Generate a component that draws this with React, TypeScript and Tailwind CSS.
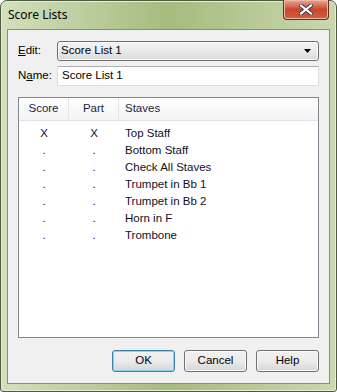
import React from 'react';

const rows = [
  { score: 'X', part: 'X', staff: 'Top Staff' },
  { score: '.', part: '.', staff: 'Bottom Staff' },
  { score: '.', part: '.', staff: 'Check All Staves' },
  { score: '.', part: '.', staff: 'Trumpet in Bb 1' },
  { score: '.', part: '.', staff: 'Trumpet in Bb 2' },
  { score: '.', part: '.', staff: 'Horn in F' },
  { score: '.', part: '.', staff: 'Trombone' },
];

function DialogButton({ label, isDefault }: { label: string; isDefault?: boolean }) {
  return (
    <button
      className={
        'w-[63px] h-[22px] rounded-[3px] border text-[11.5px] text-black bg-gradient-to-b from-[#f2f2f2] via-[#ebebeb] to-[#d6d6d6] ' +
        (isDefault ? 'border-[#3c7fb1] shadow-[inset_0_0_0_1px_#8ed0f0]' : 'border-[#707070] shadow-[inset_0_0_0_1px_#fbfbfb]')
      }
    >
      {label}
    </button>
  );
}

export default function App() {
  return (
    <div className="w-[337px] h-[392px] font-['Liberation_Sans',sans-serif] text-[11.5px] text-black">
      <div className="w-full h-full flex flex-col rounded-t-[7px] rounded-b-[3px] border border-[#4d5a40] bg-gradient-to-r from-[#d3e0bd] via-[#a6bb7e] to-[#c9d8ae] shadow-[inset_0_0_0_1px_#e6eedb]">
        {/* Title bar */}
        <div className="relative h-[28px] flex items-center pl-[7px] shrink-0">
          <span className="font-['Noto_Sans',sans-serif] text-[12px] text-black">Score Lists</span>
          <div className="absolute right-[7px] top-[-1px] w-[46px] h-[20px] rounded-b-[4px] border border-[#6b2a1e] border-t-0 bg-gradient-to-b from-[#e8a696] via-[#c9452c] to-[#d2603f] flex items-center justify-center shadow-[inset_0_0_0_1px_#f0b9a8]">
            <svg width="14" height="11" viewBox="0 0 14 11">
              <path d="M2 1.5 L12 9.5 M12 1.5 L2 9.5" stroke="#3a3a3a" strokeWidth="4" strokeLinecap="square" />
              <path d="M2 1.5 L12 9.5 M12 1.5 L2 9.5" stroke="#ffffff" strokeWidth="2.2" strokeLinecap="square" />
            </svg>
          </div>
        </div>

        {/* Client area */}
        <div className="flex-1 mx-[6px] mb-[7px] border border-[#84936a] bg-[#f0f0f0] flex flex-col px-[10px] pt-[11px] pb-[10px]">
          <div className="flex items-center h-[20px]">
            <label className="w-[39px]">
              <span className="underline">E</span>dit:
            </label>
            <div className="relative flex-1 h-[20px] rounded-[3px] border border-[#707070] bg-gradient-to-b from-[#f2f2f2] via-[#ebebeb] to-[#d9d9d9] flex items-center pl-[3px] shadow-[inset_0_0_0_1px_#fafafa]">
              Score List 1
              <svg className="absolute right-[6px] top-[7px]" width="8" height="4" viewBox="0 0 8 4">
                <path d="M0 0 H7 L3.5 4 Z" fill="#000" />
              </svg>
            </div>
          </div>
          <div className="flex items-center h-[20px] mt-[5px]">
            <label className="w-[39px]">
              N<span className="underline">a</span>me:
            </label>
            <div className="flex-1 h-[20px] border border-[#dbdfe6] border-t-[#abadb3] bg-white flex items-center pl-[4px]">
              Score List 1
            </div>
          </div>

          {/* List */}
          <div className="mt-[11px] h-[241px] border border-[#828790] bg-white flex flex-col">
            <div className="flex h-[23px] bg-gradient-to-b from-white to-[#f2f3f5] border-b border-[#e2e3e5] text-[#1e1e3c]">
              <div className="w-[50px] flex items-center justify-center border-r border-[#e5e5e5]">Score</div>
              <div className="w-[50px] flex items-center justify-center border-r border-[#e5e5e5]">Part</div>
              <div className="flex-1 flex items-center pl-[6px]">Staves</div>
            </div>
            <div className="flex flex-col pt-[4px] text-[#101028]">
              {rows.map((r) => (
                <div key={r.staff} className="flex h-[17px] items-center">
                  <div className="w-[50px] text-center">{r.score}</div>
                  <div className="w-[50px] text-center">{r.part}</div>
                  <div className="pl-[6px]">{r.staff}</div>
                </div>
              ))}
            </div>
          </div>

          {/* Buttons */}
          <div className="mt-[12px] flex justify-end gap-[9px]">
            <DialogButton label="OK" isDefault />
            <DialogButton label="Cancel" />
            <DialogButton label="Help" />
          </div>
        </div>
      </div>
    </div>
  );
}
